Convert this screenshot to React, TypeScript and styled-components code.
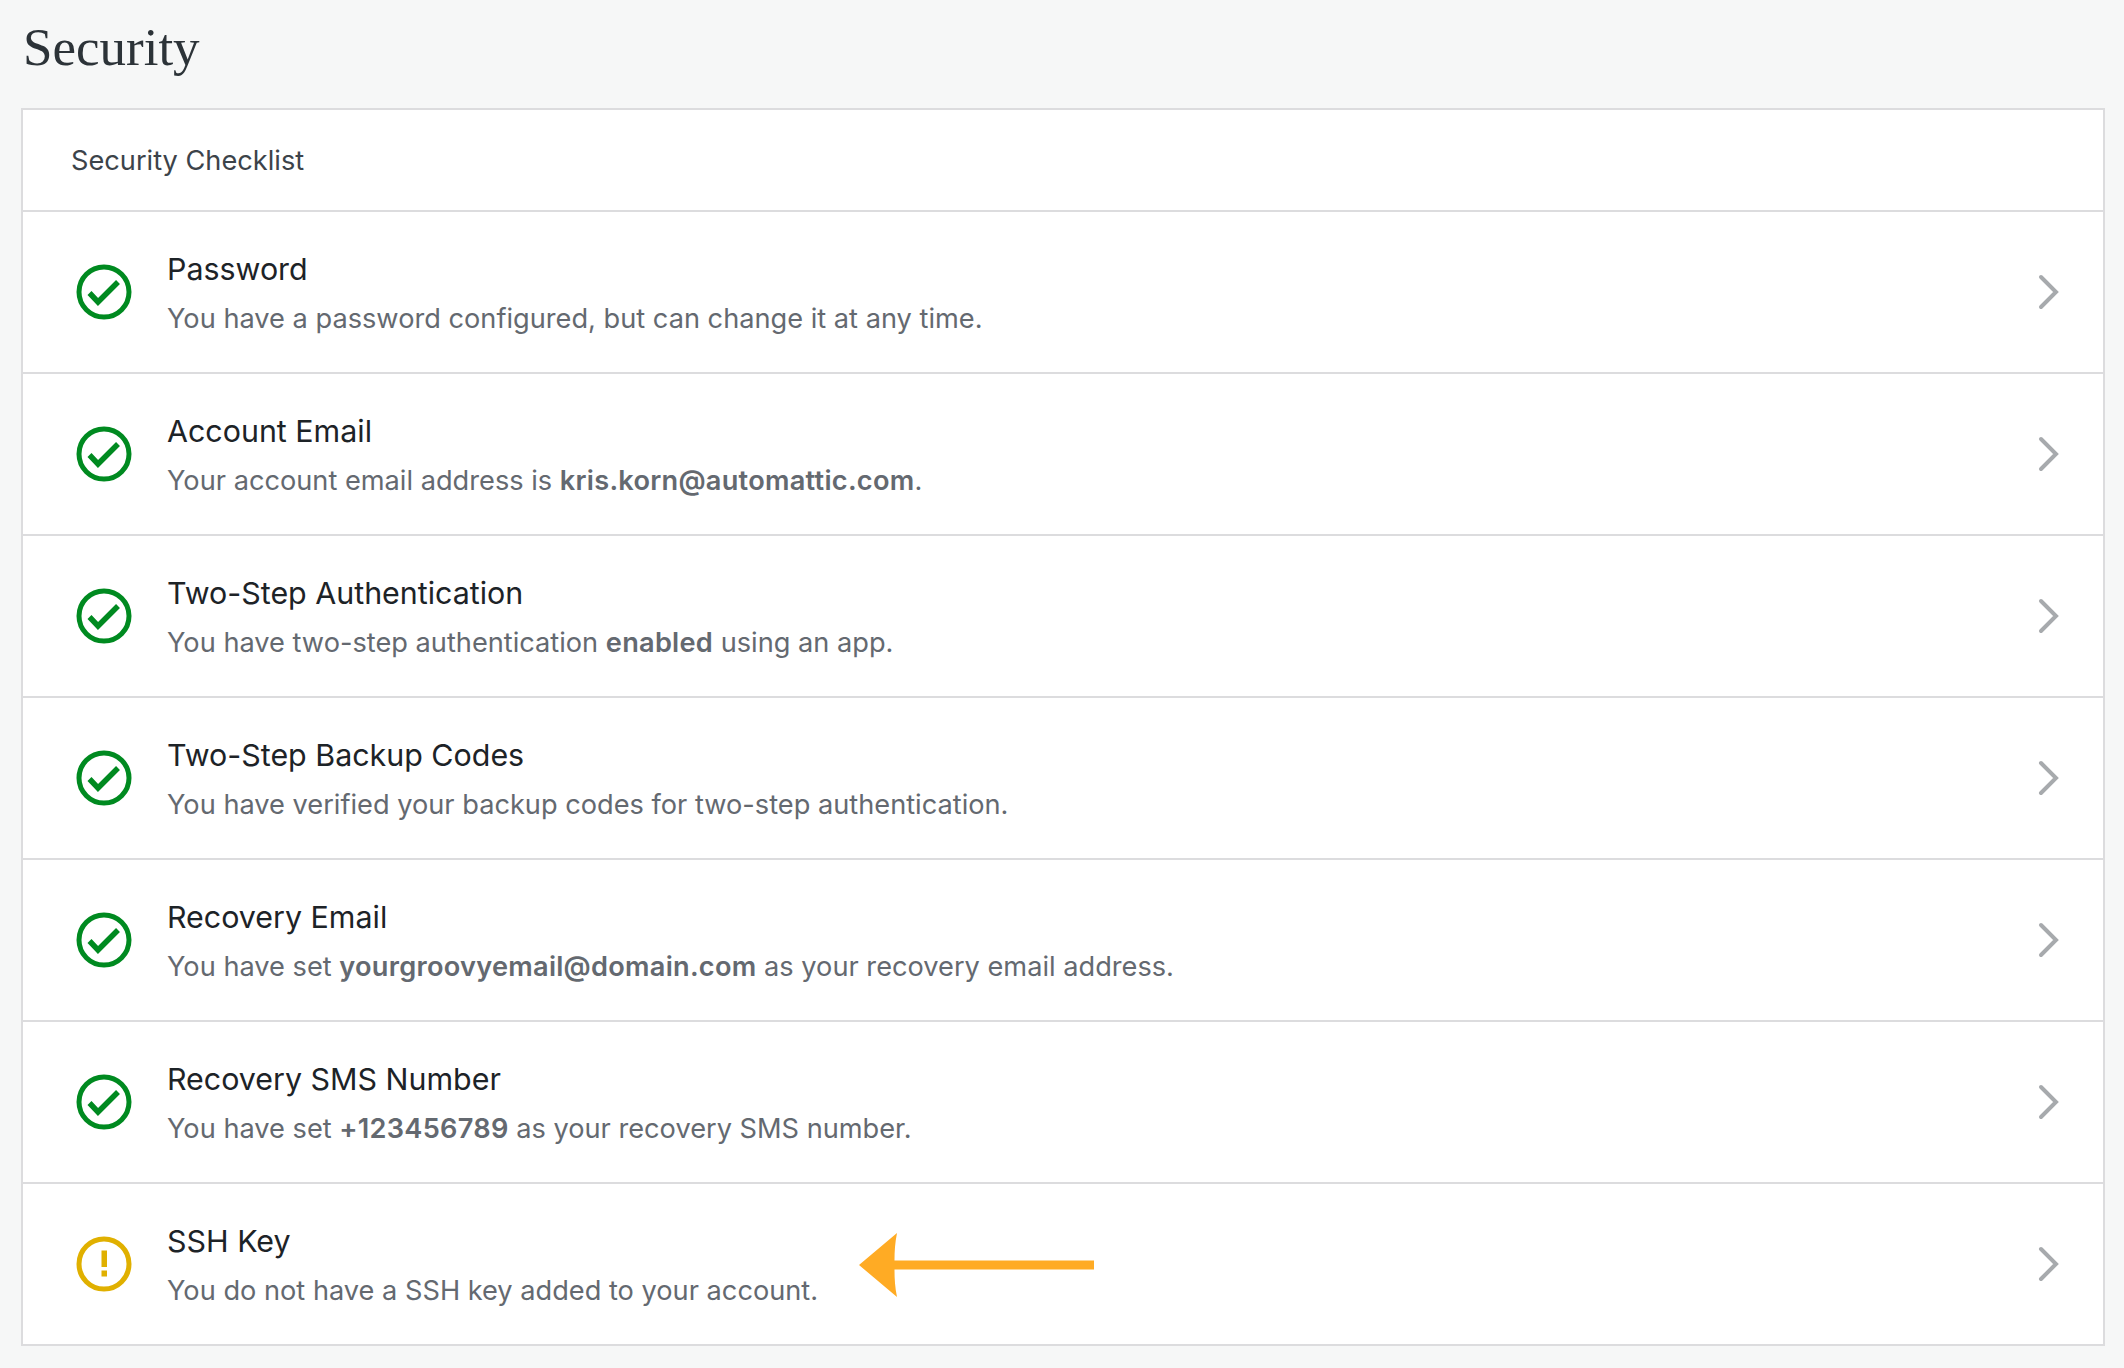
import React, { ReactNode } from 'react';
import styled, { createGlobalStyle } from 'styled-components';

type CheckItem = {
  title: string;
  desc: ReactNode;
  warn?: boolean;
};

const items: CheckItem[] = [
  { title: 'Password', desc: 'You have a password configured, but can change it at any time.' },
  {
    title: 'Account Email',
    desc: (
      <>
        Your account email address is <b>kris.korn@automattic.com</b>.
      </>
    ),
  },
  {
    title: 'Two-Step Authentication',
    desc: (
      <>
        You have two-step authentication <b>enabled</b> using an app.
      </>
    ),
  },
  { title: 'Two-Step Backup Codes', desc: 'You have verified your backup codes for two-step authentication.' },
  {
    title: 'Recovery Email',
    desc: (
      <>
        You have set <b>yourgroovyemail@domain.com</b> as your recovery email address.
      </>
    ),
  },
  {
    title: 'Recovery SMS Number',
    desc: (
      <>
        You have set <b>+123456789</b> as your recovery SMS number.
      </>
    ),
  },
  { title: 'SSH Key', desc: 'You do not have a SSH key added to your account.', warn: true },
];

const CheckIcon = () => (
  <svg width="64" height="64" viewBox="0 0 64 64" fill="none">
    <circle cx="32" cy="32" r="25" stroke="#008a20" strokeWidth="5" />
    <path d="M17.5 33L26 42L46 22" stroke="#008a20" strokeWidth="5.5" />
  </svg>
);

const WarnIcon = () => (
  <svg width="64" height="64" viewBox="0 0 64 64" fill="none">
    <circle cx="32" cy="32" r="25" stroke="#e0b000" strokeWidth="5" />
    <rect x="29.5" y="18.5" width="5.5" height="16.5" fill="#e0b000" />
    <rect x="29.5" y="38.5" width="5.5" height="6" fill="#e0b000" />
  </svg>
);

const Chevron = () => (
  <svg width="24" height="36" viewBox="0 0 24 36" fill="none">
    <path d="M4 3L19 18L4 33" stroke="#a7aaad" strokeWidth="4" strokeLinecap="round" />
  </svg>
);

const App = () => {
  return (
    <Page>
      <GlobalStyle />
      <Title>Security</Title>
      <Card>
        <CardHeader>Security Checklist</CardHeader>
        {items.map((item) => (
          <Row key={item.title}>
            <IconWrap>{item.warn ? <WarnIcon /> : <CheckIcon />}</IconWrap>
            <RowText>
              <RowTitle>{item.title}</RowTitle>
              <RowDesc>{item.desc}</RowDesc>
            </RowText>
            <Chevron />
            {item.warn && (
              <Arrow width="236" height="64" viewBox="0 0 236 64">
                <path d="M0 32L38 0C36 10 35.500 18 35.500 27.500H235V36.500H35.500C35.500 46 36 54 38 64Z" fill="#ffab24" />
              </Arrow>
            )}
          </Row>
        ))}
      </Card>
    </Page>
  );
};

export default App;

const GlobalStyle = createGlobalStyle`
  html, body {
    margin: 0;
    background: #f6f7f7;
  }
`;

const Page = styled.div`
  box-sizing: border-box;
  width: 2124px;
  height: 1368px;
  padding: 0 19.500px 0 21px;
  background: #f6f7f7;
  font-family: Inter, "Liberation Sans", sans-serif;
`;

const Title = styled.h1`
  margin: 0;
  height: 108px;
  padding: 17px 0 0 2px;
  box-sizing: border-box;
  font-family: "Liberation Serif", serif;
  font-size: 53px;
  line-height: 60px;
  font-weight: 400;
  color: #2c3338;
`;

const Card = styled.div`
  background: #fff;
  border: 2px solid #dcdcde;
`;

const CardHeader = styled.div`
  box-sizing: border-box;
  height: 100px;
  padding-left: 48px;
  display: flex;
  align-items: center;
  font-size: 27.200px;
  color: #3c434a;
`;

const Row = styled.div`
  position: relative;
  box-sizing: border-box;
  height: 162px;
  border-top: 2px solid #dcdcde;
  padding: 0 41.500px 0 48.500px;
  display: flex;
  align-items: center;
`;

const IconWrap = styled.div`
  display: flex;
  margin-right: 31.500px;
`;

const RowText = styled.div`
  flex: 1;
  display: flex;
  flex-direction: column;
  gap: 10px;
  padding-top: 4px;
`;

const RowTitle = styled.div`
  font-size: 30.400px;
  line-height: 40px;
  color: #1d2327;
`;

const RowDesc = styled.div`
  font-size: 27.200px;
  line-height: 40px;
  color: #646970;

  b {
    font-weight: 600;
    letter-spacing: 0.250px;
  }
`;

const Arrow = styled.svg`
  position: absolute;
  left: 836px;
  top: 49px;
`;
